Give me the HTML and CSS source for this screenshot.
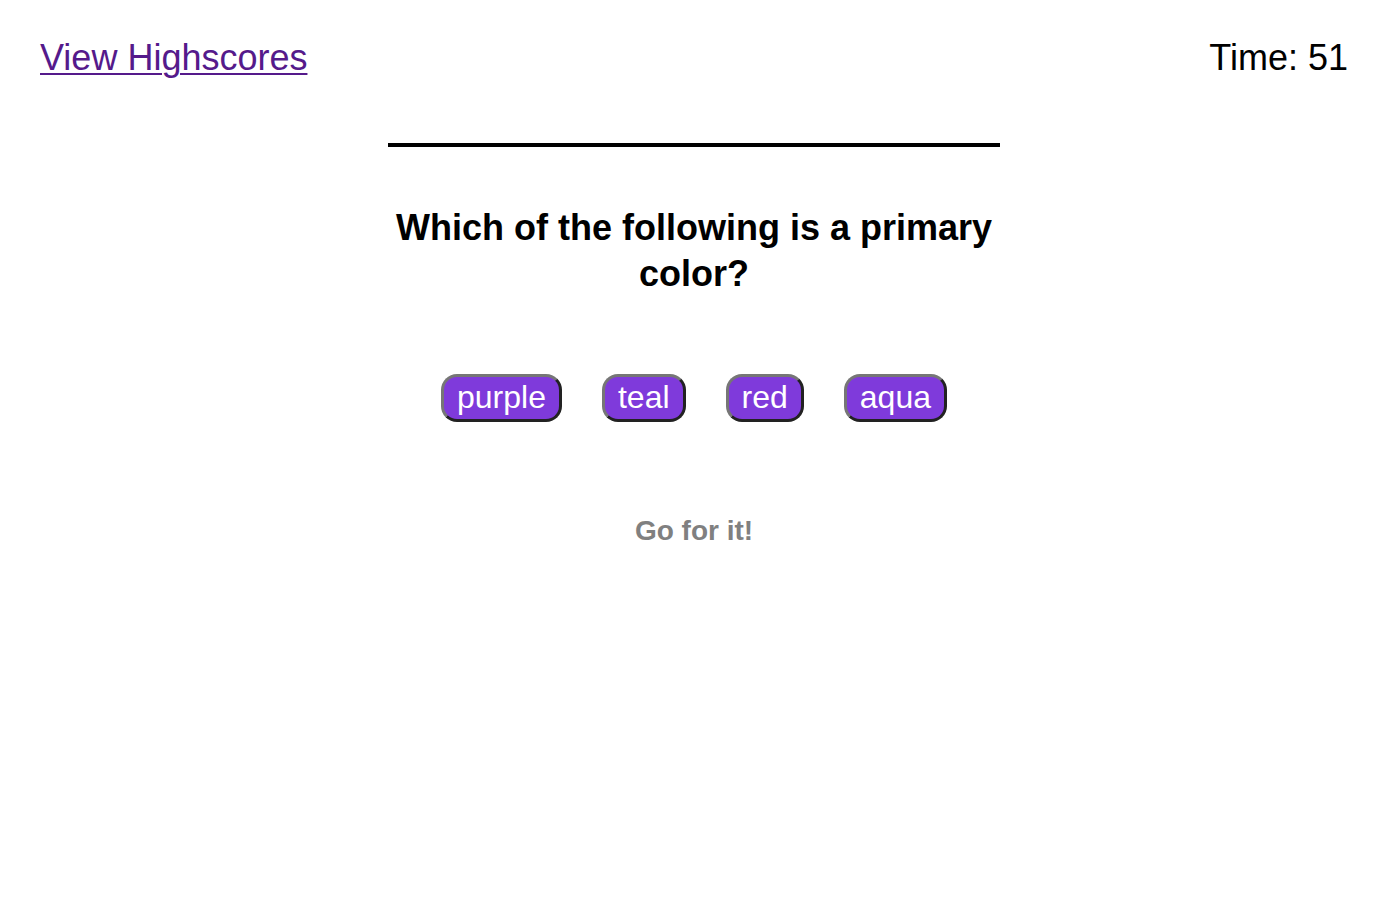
FILE: index.html
```html
<!DOCTYPE html>
<html lang="en">
<head>
<meta charset="utf-8">
<title>Quiz</title>
<link rel="stylesheet" href="styles.css">
</head>
<body>
<header class="top-bar">
  <a class="highscores-link" href="#">View Highscores</a>
  <div class="timer">Time: 51</div>
</header>
<main class="quiz">
  <h2 class="question">Which of the following is a primary color?</h2>
  <div class="choices">
    <button class="choice">purple</button>
    <button class="choice">teal</button>
    <button class="choice">red</button>
    <button class="choice">aqua</button>
  </div>
  <p class="feedback">Go for it!</p>
</main>
</body>
</html>
```
FILE: styles.css
```css
html, body {
  margin: 0;
  padding: 0;
  background: #ffffff;
}

body {
  font-family: "Liberation Sans", Arial, Helvetica, sans-serif;
  color: #000000;
}

.top-bar {
  display: flex;
  justify-content: space-between;
  align-items: flex-start;
  padding: 38px 40px 0 40px;
  font-size: 36px;
  line-height: 40px;
}

.highscores-link {
  color: #551a8b;
  text-decoration: underline;
  text-underline-offset: 3px;
  text-decoration-thickness: 2px;
}

.timer {
  color: #000000;
}

.quiz {
  width: 612px;
  margin: 65px auto 0 auto;
  border-top: 4px solid #000000;
  text-align: center;
}

.question {
  margin: 58px 0 0 0;
  font-size: 36px;
  line-height: 46px;
  font-weight: bold;
}

.choices {
  display: flex;
  justify-content: center;
  gap: 40px;
  margin-top: 77px;
}

.choice {
  font-family: "Liberation Sans", Arial, Helvetica, sans-serif;
  font-size: 32px;
  line-height: 36px;
  color: #ffffff;
  background: #7f3adb;
  padding: 2px 13px 4px 13px;
  border-width: 3px;
  border-style: solid;
  border-color: #767676 #222222 #222222 #767676;
  border-radius: 16px;
  cursor: pointer;
}

.feedback {
  margin: 93px 0 0 0;
  font-size: 28px;
  line-height: 32px;
  font-weight: bold;
  color: #808080;
}
```
